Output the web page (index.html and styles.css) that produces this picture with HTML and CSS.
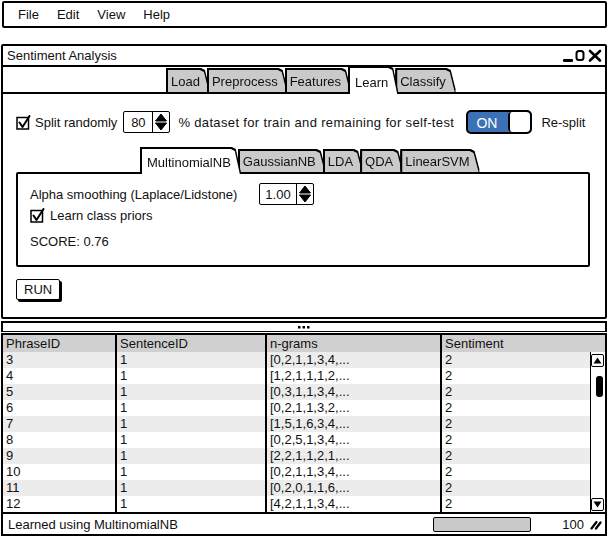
FILE: index.html
```html
<!DOCTYPE html>
<html>
<head>
<meta charset="utf-8">
<link rel="stylesheet" href="styles.css">
</head>
<body>
<div class="menubar">
  <span class="menu-item">File</span>
  <span class="menu-item">Edit</span>
  <span class="menu-item">View</span>
  <span class="menu-item">Help</span>
</div>

<div class="window">
  <div class="titlebar">
    <span class="title">Sentiment Analysis</span>
    <svg class="winctl" width="41" height="14" viewBox="0 0 41 14">
      <rect x="1" y="10" width="10" height="3" rx="1" fill="#000"/>
      <rect x="14.5" y="2" width="7" height="9" rx="2.5" fill="none" stroke="#000" stroke-width="2"/>
      <path d="M28 2 L38 11.5 M38 2 L28 11.5" stroke="#000" stroke-width="2.6" stroke-linecap="round"/>
    </svg>
  </div>

  <div class="tabs outer-tabs">
    <div class="tab"><span class="shape">Load</span></div>
    <div class="tab"><span class="shape">Preprocess</span></div>
    <div class="tab"><span class="shape">Features</span></div>
    <div class="tab active"><span class="shape">Learn</span></div>
    <div class="tab"><span class="shape">Classify</span></div>
  </div>

  <div class="panel">
    <div class="split-row">
      <svg class="checkbox" width="15" height="15" viewBox="0 0 15 15">
        <rect x="1" y="2.5" width="11.5" height="11.5" fill="#fff" stroke="#000" stroke-width="1.5"/>
        <path d="M3.5 7.5 L6.5 12 L13.5 1" fill="none" stroke="#000" stroke-width="2" stroke-linecap="round" stroke-linejoin="round"/>
      </svg>
      <span class="lbl-split">Split randomly</span>
      <div class="spinner sp-split">
        <span class="sp-val">80</span>
        <svg class="sp-arrows" width="16" height="20" viewBox="0 0 16 20">
          <path d="M2.5 9 L8 2 L13.5 9 Z M2.5 11 L8 18 L13.5 11 Z" fill="#000" stroke="#000" stroke-width="1" stroke-linejoin="round"/>
        </svg>
      </div>
      <span class="lbl-pct">% dataset for train and remaining for self-test</span>
      <div class="toggle">
        <span class="toggle-on">ON</span>
        <span class="toggle-knob"></span>
      </div>
      <span class="lbl-resplit">Re-split</span>
    </div>

    <div class="tabs inner-tabs">
      <div class="tab active"><span class="shape">MultinomialNB</span></div>
      <div class="tab"><span class="shape">GaussianNB</span></div>
      <div class="tab"><span class="shape">LDA</span></div>
      <div class="tab"><span class="shape">QDA</span></div>
      <div class="tab"><span class="shape">LinearSVM</span></div>
    </div>

    <div class="inner-panel">
      <div class="alpha-row">
        <span class="lbl-alpha">Alpha smoothing (Laplace/Lidstone)</span>
        <div class="spinner sp-alpha">
          <span class="sp-val">1.00</span>
          <svg class="sp-arrows" width="16" height="20" viewBox="0 0 16 20">
            <path d="M2.5 9 L8 2 L13.5 9 Z M2.5 11 L8 18 L13.5 11 Z" fill="#000" stroke="#000" stroke-width="1" stroke-linejoin="round"/>
          </svg>
        </div>
      </div>
      <div class="prior-row">
        <svg class="checkbox" width="15" height="15" viewBox="0 0 15 15">
          <rect x="1" y="2.5" width="11.5" height="11.5" fill="#fff" stroke="#000" stroke-width="1.5"/>
          <path d="M3.5 7.5 L6.5 12 L13.5 1" fill="none" stroke="#000" stroke-width="2" stroke-linecap="round" stroke-linejoin="round"/>
        </svg>
        <span class="lbl-prior">Learn class priors</span>
      </div>
      <div class="score">SCORE: 0.76</div>
    </div>

    <button class="run">RUN</button>
  </div>
</div>

<div class="splitter">
  <svg width="12" height="3" viewBox="0 0 12 3"><rect x="0" y="0" width="2.5" height="2.5" fill="#000"/><rect x="4.5" y="0" width="2.5" height="2.5" fill="#000"/><rect x="9" y="0" width="2.5" height="2.5" fill="#000"/></svg>
</div>

<div class="table">
  <div class="row head">
    <div class="cell">PhraseID</div>
    <div class="cell">SentenceID</div>
    <div class="cell">n-grams</div>
    <div class="cell">Sentiment</div>
  </div>
  <div class="tbody">
    <div class="row odd"><div class="cell">3</div><div class="cell">1</div><div class="cell">[0,2,1,1,3,4,...</div><div class="cell">2</div></div>
    <div class="row"><div class="cell">4</div><div class="cell">1</div><div class="cell">[1,2,1,1,1,2,...</div><div class="cell">2</div></div>
    <div class="row odd"><div class="cell">5</div><div class="cell">1</div><div class="cell">[0,3,1,1,3,4,...</div><div class="cell">2</div></div>
    <div class="row"><div class="cell">6</div><div class="cell">1</div><div class="cell">[0,2,1,1,3,2,...</div><div class="cell">2</div></div>
    <div class="row odd"><div class="cell">7</div><div class="cell">1</div><div class="cell">[1,5,1,6,3,4,...</div><div class="cell">2</div></div>
    <div class="row"><div class="cell">8</div><div class="cell">1</div><div class="cell">[0,2,5,1,3,4,...</div><div class="cell">2</div></div>
    <div class="row odd"><div class="cell">9</div><div class="cell">1</div><div class="cell">[2,2,1,1,2,1,...</div><div class="cell">2</div></div>
    <div class="row"><div class="cell">10</div><div class="cell">1</div><div class="cell">[0,2,1,1,3,4,...</div><div class="cell">2</div></div>
    <div class="row odd"><div class="cell">11</div><div class="cell">1</div><div class="cell">[0,2,0,1,1,6,...</div><div class="cell">2</div></div>
    <div class="row"><div class="cell">12</div><div class="cell">1</div><div class="cell">[4,2,1,1,3,4,...</div><div class="cell">2</div></div>
    <div class="scrollbar">
      <div class="sb-btn"><svg width="9" height="7" viewBox="0 0 9 7"><path d="M0.5 6.5 L4.5 0.5 L8.5 6.5 Z" fill="#000"/></svg></div>
      <div class="sb-track"><div class="sb-thumb"></div></div>
      <div class="sb-btn"><svg width="9" height="7" viewBox="0 0 9 7"><path d="M0.5 0.5 L4.5 6.5 L8.5 0.5 Z" fill="#000"/></svg></div>
    </div>
  </div>
</div>

<div class="statusbar">
  <span class="status-text">Learned using MultinomialNB</span>
  <div class="progress"></div>
  <span class="status-num">100</span>
  <svg class="grip" width="12" height="11" viewBox="0 0 12 11">
    <path d="M1.5 9.5 L6.5 3 M6 9.5 L10.5 3.5" stroke="#000" stroke-width="2.2" stroke-linecap="round"/>
  </svg>
</div>
</body>
</html>
```

FILE: styles.css
```css
* { box-sizing: border-box; }

html, body {
  margin: 0;
  padding: 0;
  background: #fff;
}

body {
  font-family: "Liberation Sans", Arial, sans-serif;
  font-size: 13px;
  color: #111;
  width: 609px;
  height: 538px;
  overflow: hidden;
  padding-top: 1px;
}

/* Menu bar */
.menubar {
  margin-left: 2px;
  width: 605px;
  height: 27px;
  border: 2px solid #000;
  border-radius: 2px;
  display: flex;
  align-items: center;
  padding-left: 14px;
  gap: 18px;
}

/* Window */
.window {
  margin-top: 16px;
  margin-left: 1px;
  width: 606px;
  border: 2px solid #000;
  border-radius: 2px;
}

.titlebar {
  height: 21px;
  border-bottom: 2px solid #000;
  display: flex;
  align-items: center;
  justify-content: space-between;
  padding: 0 2px 0 4px;
}

.winctl { display: block; margin-top: 1px; }

/* Tabs */
.tabs {
  display: flex;
  align-items: flex-end;
  position: relative;
  z-index: 1;
  height: 27px;
  margin-bottom: -2px;
}

.outer-tabs { padding-left: 165px; }

.inner-tabs {
  margin-top: 13px;
  margin-left: 126px;
}

.tab {
  filter: drop-shadow(1.5px 0 0 #000) drop-shadow(-1.5px 0 0 #000) drop-shadow(0 -1.5px 0 #000);
  margin-bottom: 2px;
  height: 22px;
}

.inner-tabs .tab { height: 21px; }

.tab .shape {
  display: flex;
  align-items: center;
  height: 100%;
  padding: 0 9px 0 3px;
  background: #cacaca;
  clip-path: polygon(0 0, calc(100% - 9px) 0, calc(100% - 5px) 2px, 100% 100%, 0 100%);
}

.tab.active {
  height: 26px;
  margin-bottom: 0;
  z-index: 2;
}

.inner-tabs .tab.active { height: 25px; }

.tab.active .shape {
  background: #fff;
  padding-left: 5px;
  padding-top: 2px;
}

.panel {
  border-top: 2px solid #000;
  padding: 16px 15px 17px 13px;
  position: relative;
}

/* Split row */
.split-row {
  display: flex;
  align-items: center;
  height: 24px;
}

.checkbox { display: block; flex: none; }

.lbl-split { margin-left: 4px; }

.spinner {
  display: flex;
  align-items: stretch;
  height: 22px;
  border: 1.5px solid #000;
  border-radius: 2px;
  background: #fff;
}

.sp-val {
  display: flex;
  align-items: center;
  justify-content: center;
  flex: 1;
  border-right: 1.5px solid #000;
}

.sp-arrows { display: block; align-self: center; }

.sp-split {
  margin-left: 6px;
  width: 47px;
}

.lbl-pct {
  margin-left: 8px;
  width: 274px;
  letter-spacing: 0.35px;
  white-space: nowrap;
}

.toggle {
  margin-left: 14px;
  width: 66px;
  height: 24px;
  border: 2px solid #000;
  border-radius: 5px;
  background: #3c71b7;
  display: flex;
  overflow: hidden;
}

.toggle-on {
  flex: 1;
  color: #fff;
  font-size: 14px;
  display: flex;
  align-items: center;
  padding-left: 8px;
  padding-top: 1px;
}

.toggle-knob {
  width: 22px;
  background: #fff;
  border-left: 2px solid #000;
  border-radius: 4px;
}

.lbl-resplit { margin-left: 9px; }

/* Inner panel */
.inner-panel {
  width: 574px;
  border: 2px solid #000;
  border-radius: 2px;
  padding: 9px 12px 15px 12px;
}

.alpha-row {
  display: flex;
  align-items: center;
  height: 22px;
}

.lbl-alpha { width: 229px; }

.sp-alpha { width: 55px; }

.prior-row {
  display: flex;
  align-items: center;
  height: 16px;
  margin-top: 2px;
}

.lbl-prior { margin-left: 5px; }

.score {
  margin-top: 11px;
  line-height: 16px;
}

/* Run button */
.run {
  display: block;
  margin-top: 12px;
  width: 44px;
  height: 21px;
  border: 1.5px solid #000;
  border-radius: 2px;
  background: #fff;
  box-shadow: 2px 2px 0 #000;
  font: inherit;
  color: #111;
  text-align: left;
  padding: 0 0 0 7px;
}

/* Splitter */
.splitter {
  margin-top: 2px;
  margin-left: 1px;
  width: 606px;
  height: 11px;
  border: 2px solid #000;
  border-bottom-width: 1.5px;
  display: flex;
  justify-content: center;
  align-items: center;
}

.splitter svg { display: block; }

/* Table */
.table {
  margin-top: 1px;
  margin-left: 1px;
  width: 606px;
  border: 2px solid #000;
  border-bottom: none;
}

.row {
  display: grid;
  grid-template-columns: 112px 150px 175px 1fr;
  height: 16px;
  line-height: 16px;
}

.row.head {
  height: 17px;
  line-height: 17px;
  background: #d0d0d0;
}

.row.odd { background: #ececec; }

.cell {
  padding-left: 3px;
  white-space: nowrap;
  overflow: hidden;
}

.cell + .cell { border-left: 2px solid #000; }

.tbody { position: relative; }

.scrollbar {
  position: absolute;
  right: 0;
  top: 0;
  bottom: 0;
  width: 15px;
  background: #fff;
  border-left: 1.5px solid #000;
  display: flex;
  flex-direction: column;
  padding: 2px 1px 1px 0;
}

.sb-btn {
  height: 13px;
  border: 1.5px solid #000;
  border-radius: 2px;
  display: flex;
  align-items: center;
  justify-content: center;
}

.sb-btn svg { display: block; }

.sb-track {
  flex: 1;
  position: relative;
}

.sb-thumb {
  position: absolute;
  top: 9px;
  right: 1px;
  width: 7px;
  height: 21px;
  background: #000;
  border-radius: 3px;
}

/* Status bar */
.statusbar {
  margin-left: 1px;
  width: 606px;
  height: 24px;
  border: 2px solid #000;
  display: flex;
  align-items: center;
  padding: 0 3px 0 5px;
}

.status-text { flex: 1; }

.progress {
  width: 98px;
  height: 15px;
  background: #c9c9c9;
  border: 1.5px solid #000;
  border-radius: 2px;
}

.status-num { margin-left: 31px; }

.grip { display: block; margin-left: 6px; }
```
